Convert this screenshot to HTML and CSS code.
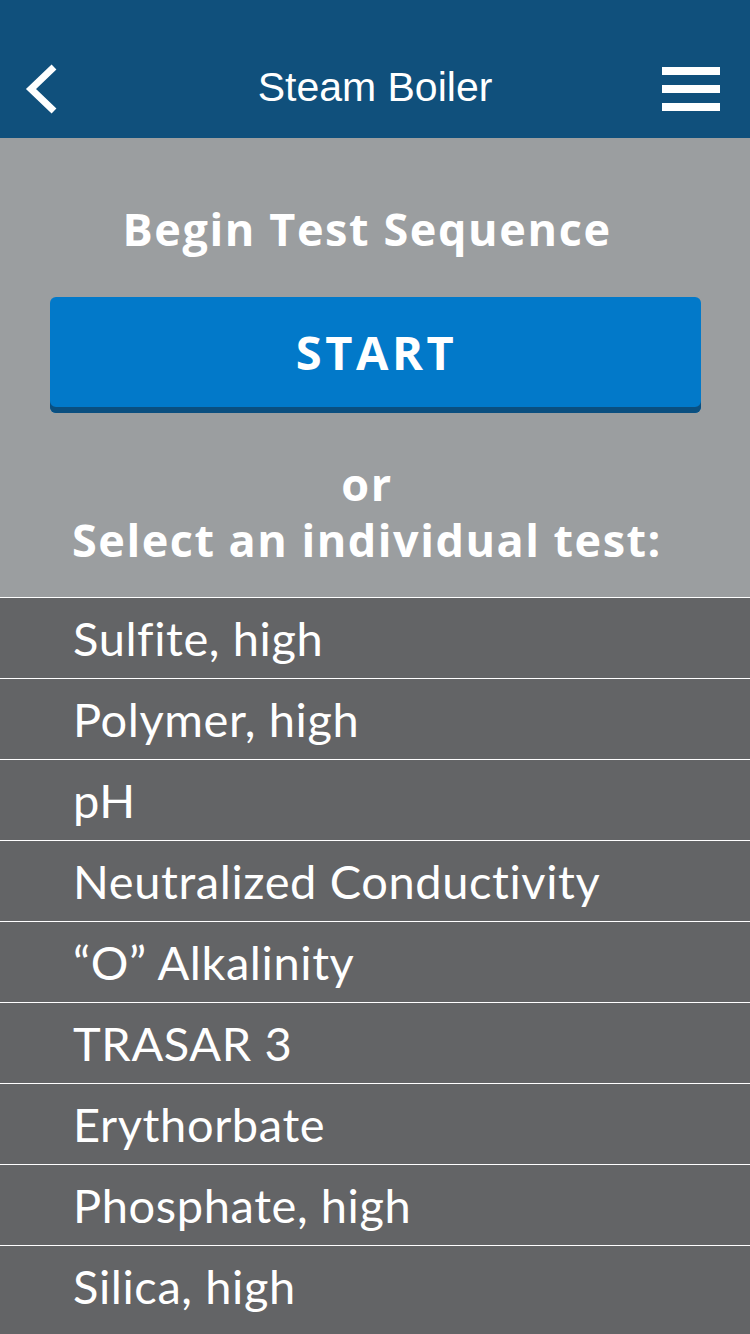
FILE: index.html
```html
<!DOCTYPE html>
<html>
<head>
<meta charset="utf-8">
<link rel="stylesheet" href="styles.css">
</head>
<body>
<div class="app">
  <header class="topbar">
    <svg class="back" width="36" height="50" viewBox="0 0 36 50"><polyline points="32,3 9,25 32,47" fill="none" stroke="#fff" stroke-width="7"/></svg>
    <h1 class="title">Steam Boiler</h1>
    <div class="menu"><span></span><span></span><span></span></div>
  </header>
  <section class="intro">
    <h2 class="heading">Begin Test Sequence</h2>
    <button class="start">START</button>
    <p class="or">or<br>Select an individual test:</p>
  </section>
  <ul class="tests">
    <li>Sulfite, high</li>
    <li>Polymer, high</li>
    <li>pH</li>
    <li>Neutralized Conductivity</li>
    <li>“O” Alkalinity</li>
    <li>TRASAR 3</li>
    <li>Erythorbate</li>
    <li>Phosphate, high</li>
    <li>Silica, high</li>
  </ul>
</div>
</body>
</html>
```
FILE: styles.css
```css
* { box-sizing: border-box; }
html, body { margin: 0; padding: 0; }
body { width: 750px; height: 1334px; overflow: hidden; background: #636466; }
.app { display: flex; flex-direction: column; }
.topbar {
  height: 138px;
  background: #10507c;
  display: flex;
  align-items: center;
  justify-content: space-between;
  padding: 40px 30px 0 22px;
  position: relative;
}
.back { display: block; }
.title {
  margin: 0;
  font-family: "Liberation Sans", Arial, sans-serif;
  font-weight: 400;
  font-size: 41px;
  color: #fff;
  position: absolute;
  left: 0; right: 0; top: 62px;
  text-align: center;
  line-height: 50px;
}
.menu { display: flex; flex-direction: column; gap: 10px; width: 58px; }
.menu span { display: block; height: 8px; background: #fff; }
.intro {
  background: #9b9ea0;
  height: 459px;
  display: flex;
  flex-direction: column;
  align-items: center;
  padding-top: 66px;
  font-family: "Open Sans", sans-serif;
  color: #fff;
}
.heading {
  margin: 0 16px 0 0;
  font-size: 45px;
  font-weight: 700;
  line-height: 50px;
  letter-spacing: 1.6px;
}
.start {
  margin-top: 43px;
  width: 651px;
  height: 116px;
  border: 0;
  border-radius: 6px;
  background: #0279c9;
  box-shadow: inset 0 -6px 0 #0a4f80;
  color: #fff;
  font-family: "Open Sans", sans-serif;
  font-weight: 700;
  font-size: 47px;
  letter-spacing: 3.5px;
  padding: 0 0 6px 3px;
}
.or {
  margin: 43px 16px 0 0;
  text-align: center;
  font-size: 45px;
  font-weight: 700;
  line-height: 56px;
  letter-spacing: 1.5px;
}
.tests { list-style: none; margin: 0; padding: 0; }
.tests li {
  height: 81px;
  border-top: 1px solid #fff;
  background: #636466;
  color: #fff;
  font-family: "Lato", sans-serif;
  font-weight: 400;
  font-size: 47px;
  letter-spacing: 0.6px;
  font-variant-ligatures: none;
  padding-left: 73px;
  display: flex;
  align-items: center;
}
```
